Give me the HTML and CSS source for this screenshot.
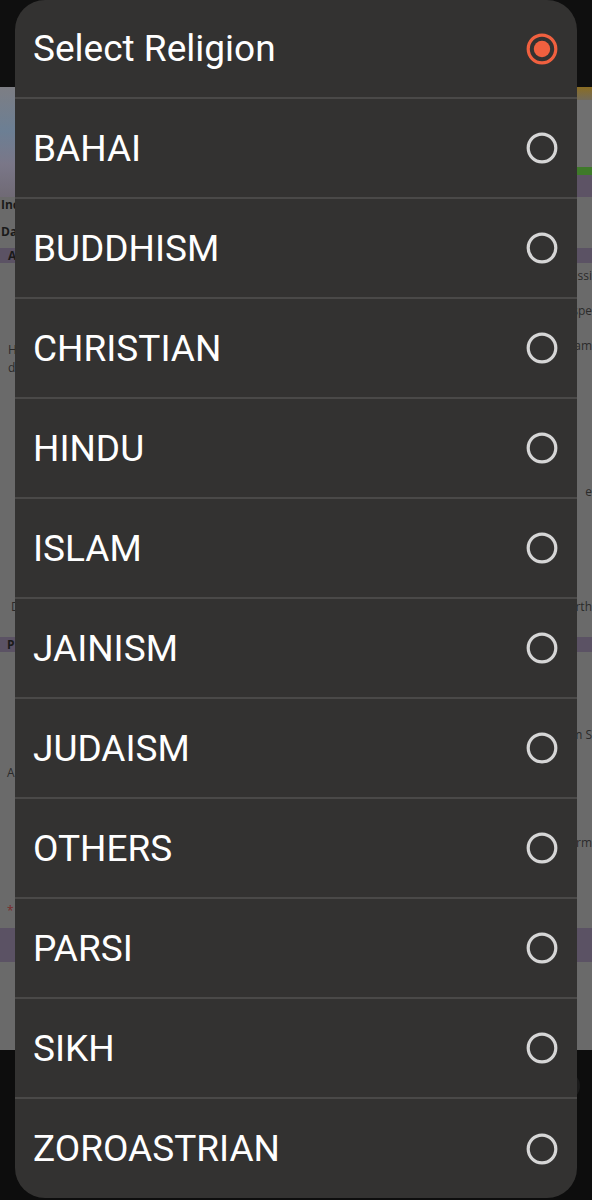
FILE: index.html
```html
<!DOCTYPE html>
<html>
<head>
<meta charset="utf-8">
<link rel="stylesheet" href="styles.css">
</head>
<body>
<div class="screen">
  <div class="topbar"></div>
  <div class="page">
    <div class="banner">
      <div class="banner-left"></div>
      <div class="banner-right">
        <div class="saffron"></div>
        <div class="chakra"></div>
        <div class="green"></div>
        <div class="band"></div>
      </div>
    </div>
    <div class="line l1"><span class="bold">Inc</span><span></span></div>
    <div class="line l2"><span class="bold">Da</span><span></span></div>
    <div class="line bar"><span class="bold">A</span><span></span></div>
    <div class="line l3"><span></span><span>assi</span></div>
    <div class="line l4"><span></span><span>spe</span></div>
    <div class="line l5"><div class="hd"><div>H</div><div class="d">d</div></div><span class="nam">Nam</span></div>
    <div class="line l6"><span></span><span class="e">e</span></div>
    <div class="line l7"><span>D</span><span>rth</span></div>
    <div class="line bar2"><span class="bold">P</span><span></span></div>
    <div class="line l8"><span></span><span>m S</span></div>
    <div class="line l9"><span>A</span><span></span></div>
    <div class="line l10"><span></span><span>form</span></div>
    <div class="line l11"><span class="star">*</span><span></span></div>
    <div class="line box"><span></span><span></span></div>
  </div>
  <div class="bottom"><div class="fab"></div></div>

  <div class="dialog">
    <div class="row head">
      <span class="label">Select Religion</span>
      <svg class="radio" width="32" height="32" viewBox="0 0 32 32"><circle cx="16" cy="16" r="13.8" fill="none" stroke="#f0603f" stroke-width="3.2"/><circle cx="16" cy="16" r="8.2" fill="#f0603f"/></svg>
    </div>
    <div class="row"><span class="label">BAHAI</span><svg class="radio" width="32" height="32" viewBox="0 0 32 32"><circle cx="16" cy="16" r="13.8" fill="none" stroke="#d6d6d6" stroke-width="3.2"/></svg></div>
    <div class="row"><span class="label">BUDDHISM</span><svg class="radio" width="32" height="32" viewBox="0 0 32 32"><circle cx="16" cy="16" r="13.8" fill="none" stroke="#d6d6d6" stroke-width="3.2"/></svg></div>
    <div class="row"><span class="label">CHRISTIAN</span><svg class="radio" width="32" height="32" viewBox="0 0 32 32"><circle cx="16" cy="16" r="13.8" fill="none" stroke="#d6d6d6" stroke-width="3.2"/></svg></div>
    <div class="row"><span class="label">HINDU</span><svg class="radio" width="32" height="32" viewBox="0 0 32 32"><circle cx="16" cy="16" r="13.8" fill="none" stroke="#d6d6d6" stroke-width="3.2"/></svg></div>
    <div class="row"><span class="label">ISLAM</span><svg class="radio" width="32" height="32" viewBox="0 0 32 32"><circle cx="16" cy="16" r="13.8" fill="none" stroke="#d6d6d6" stroke-width="3.2"/></svg></div>
    <div class="row"><span class="label">JAINISM</span><svg class="radio" width="32" height="32" viewBox="0 0 32 32"><circle cx="16" cy="16" r="13.8" fill="none" stroke="#d6d6d6" stroke-width="3.2"/></svg></div>
    <div class="row"><span class="label">JUDAISM</span><svg class="radio" width="32" height="32" viewBox="0 0 32 32"><circle cx="16" cy="16" r="13.8" fill="none" stroke="#d6d6d6" stroke-width="3.2"/></svg></div>
    <div class="row"><span class="label">OTHERS</span><svg class="radio" width="32" height="32" viewBox="0 0 32 32"><circle cx="16" cy="16" r="13.8" fill="none" stroke="#d6d6d6" stroke-width="3.2"/></svg></div>
    <div class="row"><span class="label">PARSI</span><svg class="radio" width="32" height="32" viewBox="0 0 32 32"><circle cx="16" cy="16" r="13.8" fill="none" stroke="#d6d6d6" stroke-width="3.2"/></svg></div>
    <div class="row"><span class="label">SIKH</span><svg class="radio" width="32" height="32" viewBox="0 0 32 32"><circle cx="16" cy="16" r="13.8" fill="none" stroke="#d6d6d6" stroke-width="3.2"/></svg></div>
    <div class="row last"><span class="label">ZOROASTRIAN</span><svg class="radio" width="32" height="32" viewBox="0 0 32 32"><circle cx="16" cy="16" r="13.8" fill="none" stroke="#d6d6d6" stroke-width="3.2"/></svg></div>
  </div>
</div>
</body>
</html>
```
FILE: styles.css
```css
* { box-sizing: border-box; }
html, body { margin: 0; padding: 0; background: #0e0e0e; }
body { width: 592px; height: 1200px; overflow: hidden; font-family: Roboto, "Noto Sans", "Liberation Sans", sans-serif; }

.screen { position: relative; width: 592px; height: 1200px; display: flex; flex-direction: column; }
.topbar { height: 87px; flex: none; background: #0f0f0f; }
.page { height: 963px; flex: none; background: #6a6a6a; display: flex; flex-direction: column; color: #1c1c1c; font-family: "Open Sans", "Noto Sans", sans-serif; font-size: 12px; }
.bottom { flex: 1; background: #0d0d0d; position: relative; }
.fab { position: absolute; right: 12px; top: 22px; width: 28px; height: 28px; border-radius: 50%; background: #1a1a1a; }

.banner { height: 110px; flex: none; display: flex; justify-content: space-between; }
.banner-left { width: 20px; background: linear-gradient(180deg, #7d7e84 0%, #6c7f94 40%, #7a7788 70%, #706a75 100%); }
.banner-right { width: 20px; display: flex; flex-direction: column; }
.saffron { height: 13px; background: linear-gradient(180deg, #8a6d23, #716a5a); }
.chakra { height: 67px; background: #707070; }
.green { height: 8px; background: #3f7a2a; }
.band { flex: 1; background: #5d5365; }

.line { display: flex; flex: none; justify-content: space-between; align-items: flex-start; padding-left: 1px; line-height: 14px; color: #2a2a2a; }
.line span:last-child { text-align: right; }
.bold { font-weight: 700; color: #1a1a1a; }
.l1 { height: 24px; padding-top: 1px; }
.l2 { height: 27px; padding-top: 4px; }
.bar { height: 15px; background: #5b5264; padding-left: 8px; padding-top: 1px; }
.l3 { height: 26px; padding-top: 6px; }
.l4 { height: 44px; padding-top: 15px; }
.l5 { height: 40px; }
.hd { padding-left: 7px; padding-top: 9px; display: flex; flex-direction: column; gap: 2px; line-height: 16px; }
.nam { padding-top: 6px; }
.l6 { height: 226px; }
.e { padding-top: 112px; }
.l7 { height: 38px; padding-top: 1px; padding-left: 11px; }
.bar2 { height: 15px; background: #5b5264; padding-left: 7px; padding-top: 1px; }
.l8 { height: 108px; padding-top: 76px; }
.l9 { height: 60px; padding-top: 6px; padding-left: 7px; }
.l10 { height: 40px; padding-top: 16px; }
.l11 { height: 68px; padding-top: 44px; }
.star { color: #7a2a2a; padding-left: 6px; }
.box { height: 34px; background: #5b5264; }

.dialog {
  position: absolute; left: 15px; top: 0; width: 562px; height: 1198px;
  background: #333231; border-radius: 30px; overflow: hidden;
  display: flex; flex-direction: column;
}
.row {
  height: 100px; flex: none; display: flex; align-items: center; justify-content: space-between;
  padding: 0 19px 0 18px; border-top: 2px solid #4a4948;
}
.row.head { height: 97px; border-top: none; }
.row.last { height: 101px; }
.label { color: #ffffff; font-size: 37px; font-weight: 400; letter-spacing: 0; }
.radio { display: block; }
```
